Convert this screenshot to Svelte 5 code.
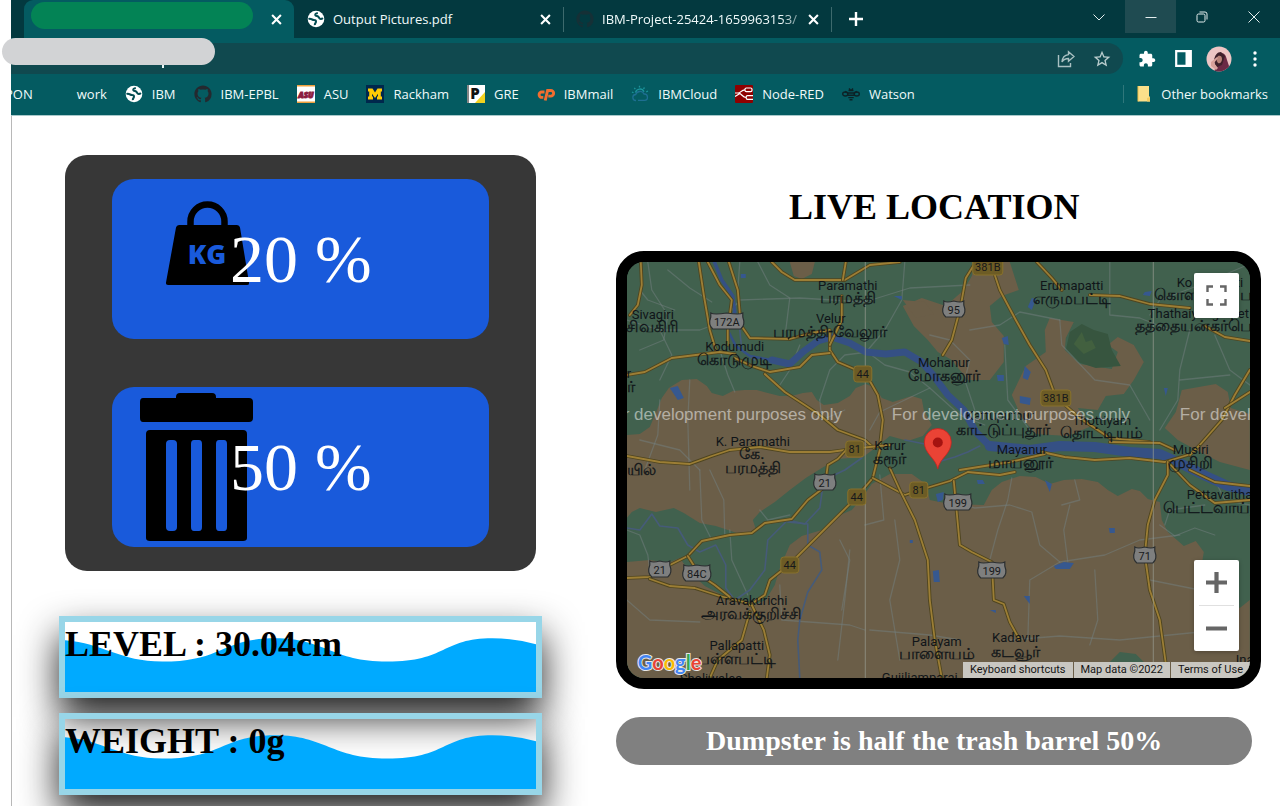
<script>
  const bookmarks = [
    { icon: 'globe', label: 'IBM' },
    { icon: 'github', label: 'IBM-EPBL' },
    { icon: 'asu', label: 'ASU' },
    { icon: 'mich', label: 'Rackham' },
    { icon: 'gre', label: 'GRE' },
    { icon: 'cpanel', label: 'IBMmail' },
    { icon: 'cloud', label: 'IBMCloud' },
    { icon: 'node', label: 'Node-RED' },
    { icon: 'bee', label: 'Watson' }
  ];

  const readings = ['LEVEL : 30.04cm', 'WEIGHT : 0g'];

  const land = [
    'M627 435L640 434 650 427 656 413 662 398 669 388 682 380 697 379 707 386 712 393 723 396 733 391 745 390 757 390 768 393 780 396 792 396 803 393 812 392 817 400 824 405 838 403 850 396 856 388 866 384 876 388 882 398 893 402 912 396 922 399 924 410 932 425 923 436 908 441 890 436 878 446 862 458 850 458 838 459 822 468 806 478 790 490 775 502 760 512 753 520 757 532 740 534 716 526 700 523 684 513 674 508 656 512 640 508 632 512 627 518Z',
    'M627 562L650 560 668 563 680 558 690 572 705 586 728 598 752 606 766 600 775 585 780 568 790 545 802 536 822 530 838 516 852 510 862 498 872 484 890 474 912 474 926 484 930 500 950 504 984 505 992 490 1002 482 1020 476 1036 477 1050 484 1064 480 1082 479 1098 482 1108 490 1118 496 1132 489 1140 491 1148 499 1160 502 1162 520 1168 532 1184 546 1196 541 1204 552 1202 564 1210 580 1216 595 1240 608 1250 600 1250 678 627 678Z',
    'M975 262L1010 262 1019 290 1002 296 990 306 992 322 1004 336 1004 362 990 380 968 380 952 360 938 352 928 340 914 326 903 306 922 298 946 306 964 290 972 276Z',
    'M1045 330L1050 318 1074 322 1066 338 1065 350 1080 364 1112 369 1118 352 1108 345 1118 337 1134 345 1144 362 1134 380 1124 394 1106 396 1098 410 1078 408 1092 426 1068 436 1036 434 1022 418 1012 395 1026 366 1046 352Z',
    'M1182 390L1216 384 1228 392 1231 408 1250 414 1250 470 1220 462 1200 452 1178 440 1165 428 1176 412Z',
    'M790 262L815 262 812 274 802 279 794 276Z',
    'M903 300L925 302 934 314 916 318Z'
  ];

  const minor = [
    'M627 320L660 330 700 330 722 322 740 300 800 298 865 302 910 288 970 285',
    'M648 262L652 290 668 315 664 340 640 350', 'M668 270L690 288 712 302',
    'M758 262L770 285 790 298 786 330', 'M905 262L902 300 885 330 868 350',
    'M865 350L885 365 910 372 930 388 960 415 985 425', 'M930 388L905 400 880 412 870 430',
    'M820 400L830 370 845 355 868 352', 'M820 400L822 420 845 410',
    'M970 330L1000 325 1020 312 1060 320', 'M930 335L950 340 970 360 965 380 975 410',
    'M1110 262L1110 315 1140 318 1170 330', 'M1250 264L1200 285 1160 300 1150 315',
    'M1190 330L1180 370 1178 400 1160 430', 'M1215 335L1230 370 1250 385', 'M1180 380L1230 375',
    'M1060 320L1062 345 1095 380 1130 385 1150 420', 'M1005 345L1008 400 1030 430',
    'M690 380L688 420 690 490', 'M660 400L658 435 645 470', 'M700 470L702 520 712 540',
    'M627 530L640 535 648 555 650 570', 'M730 530L732 560 748 595', 'M760 510L768 520 790 515',
    'M840 540L850 560 842 610', 'M880 475L884 520 865 525', 'M780 585L782 620 850 625 865 630',
    'M710 470L724 500 725 535', 'M850 550L845 600 838 660', 'M870 630L930 635 960 640',
    'M945 500L975 508 1010 505 1032 512 1040 545 1060 562', 'M1060 562L1105 555 1140 540 1180 535',
    'M1060 562L1030 580 1028 640', 'M1070 505L1064 530 1068 562', 'M1010 640L1060 636 1120 640 1200 632',
    'M1150 580L1190 588 1200 590', 'M1095 570L1098 620 1090 645', 'M990 560L998 530 1008 500 1012 478',
    'M1160 525L1175 536 1195 528 1215 535', 'M1165 525L1170 510 1205 505', 'M640 440L680 450 700 470',
    'M627 600L650 620 700 622', 'M675 310L648 300 640 290', 'M660 330L672 355 660 380',
    'M720 350L728 375 735 392', 'M800 345L790 370 780 385', 'M895 520L900 560 890 600 900 660',
    'M1075 480L1080 500 1062 505', 'M1215 480L1225 500 1250 505', 'M740 262L738 290'
  ];

  const streams = [
    'M627 528L640 530 652 514 660 526 678 528 688 545 700 552 716 545 726 565 726 588 735 600 750 590 765 570 768 540 788 520 805 524 820 508 824 480 845 470 862 458',
    'M808 545L820 552 822 570 808 592 800 620 798 640 800 678',
    'M938 462L955 457 968 452 980 446', 'M905 440L925 444 938 444',
    'M788 522L808 524 808 545', 'M740 330L742 350 755 360'
  ];

  const roads = [
    'M641 262L642 285 638 305 630 315', 'M699 262L704 295 710 330 716 350',
    'M708 262L720 285 732 300 728 330 728 345', 'M729 262L738 290 741 325 750 338 790 339',
    'M790 339L812 333 830 330 830 350 838 362 866 374 878 395 883 420 880 447',
    'M627 375L645 372 672 358 720 352 735 354', 'M735 358L752 366 770 372 800 367 812 355 830 353',
    'M772 262L782 272 795 280 845 280', 'M842 296L842 320 830 345', 'M845 280L870 265 900 262',
    'M843 280L846 262', 'M765 374L785 392 805 405 820 415 838 430 865 440 874 448',
    'M627 456L660 462 690 464 712 456 730 450 760 447 790 452 830 452 860 448 890 445',
    'M627 578L650 577 670 565 688 556 702 541 730 535 752 533 765 523 792 519 808 500 825 487 828 465 838 459 850 446',
    'M650 579L670 586 695 588 720 596 748 603', 'M688 556L700 575 715 585 730 597',
    'M750 605L765 595 770 580 790 564 810 544 838 516 856 498 873 478 880 450',
    'M752 605L764 630 770 655 767 678', 'M750 612L742 640 718 660 710 678',
    'M873 478L905 495 920 490 950 481 968 472 1000 475 1015 472',
    'M890 468L900 490 915 520 928 560 930 600 935 640 942 678', 'M954 481L956 502 960 545 972 552 992 562 994 600 1004 604 1010 622 1020 640',
    'M976 262L966 278 962 300 960 310 952 340 943 355', 'M992 266L1000 290 1016 320 1030 345 1046 370 1056 397 1080 418 1110 438 1150 442',
    'M1037 262L1052 278 1062 290', 'M1090 295L1120 296 1150 304 1190 308', 'M1205 326L1225 337 1250 341',
    'M1250 370L1235 395 1222 420 1200 445 1190 455', 'M1042 452L1065 457 1095 460 1130 458 1165 462 1188 455',
    'M1110 442L1160 443 1175 450', 'M1168 462L1168 475 1155 500 1148 525 1145 555 1150 590 1160 620 1168 678',
    'M1170 464L1190 485 1215 503 1250 500', 'M1190 470L1215 482 1250 486',
    'M960 470L1010 462 1045 454', 'M1250 392L1225 408'
  ];

  const ponds = [
    'M670 388L678 386 684 398 678 400Z', 'M741 274h5v4h-5Z', 'M1036 299L1032 310 1028 307 1032 298Z',
    'M1002 338L1008 336 1009 345 1004 344Z', 'M1025 366L1031 372 1028 380 1023 378Z',
    'M1020 396L1031 398 1030 405 1020 403Z', 'M1164 388h4l-2 8Z', 'M1145 292L1152 291 1150 296 1143 295Z',
    'M1045 480L1052 484 1050 492Z', 'M1054 566L1064 562 1074 563 1070 569 1056 569Z',
    'M936 494L944 492 943 500 938 502Z', 'M933 571L939 570 940 582 934 582Z', 'M1024 596h6v8Z',
    'M1109 528h6v5h-5Z', 'M977 480h6l2 4h-7Z', 'M894 296h8v4Z', 'M990 610h6v3Z', 'M997 375h7v6h-6Z', 'M910 540h3v3h-3Z'
  ];

  const places = [
    [848, 290, 'Paramathi'], [831, 323, 'Velur'], [653, 319, 'Sivagiri'], [735, 351, 'Kodumudi'],
    [944, 367, 'Mohanur'], [1072, 290, 'Erumapatti'], [1000, 420, 'Kattuputhur'], [1102, 425, 'Thottiyam'],
    [1022, 454, 'Mayanur'], [1191, 454, 'Musiri'], [753, 446, 'K. Paramathi'], [890, 450, 'Karur'],
    [752, 605, 'Aravakurichi'], [737, 650, 'Pallapatti'], [711, 683, 'Sholiwales'], [937, 646, 'Palayam'],
    [1016, 642, 'Kadavur'], [920, 682, 'Gujiliamparai']
  ];
  const tamilPlaces = [
    [848, 303, 'பரமத்தி'], [830, 337, 'பரமத்தி-வேலூர்'], [653, 332, 'சிவகிரி'], [735, 365, 'கொடுமுடி'],
    [944, 381, 'மோகனூர்'], [1072, 304, 'எருமபட்டி'], [1003, 435, 'காட்டுப்புதூர்'], [1102, 438, 'தொட்டியம்'],
    [1021, 468, 'மாயனூர்'], [1191, 468, 'முசிறி'], [752, 459, 'கே.'], [753, 473, 'பரமத்தி'], [890, 464, 'கரூர்'],
    [752, 619, 'அரவக்குறிச்சி'], [737, 664, 'பள்ளபட்டி'], [937, 659, 'பாளையம்'], [1016, 657, 'கடவூர்']
  ];
  const edgePlaces = [
    [1177, 287, 'Ko'], [1236, 287, 'ti'], [1148, 318, 'Thathaiyangarpet'], [1187, 499, 'Pettavaithalai'],
    [627, 378, 'r'], [1236, 664, 'Inam']
  ];
  const tamilEdge = [
    [1154, 300, 'கொள'], [1240, 300, 'ப'], [1135, 331, 'தத்தையன்கர்பெட்'], [1163, 513, 'பெட்டவாய்த்'],
    [627, 475, 'யில்'], [627, 392, 'ர்']
  ];
  const greyShields = [[727, 322, '172A'], [954, 310, '95'], [825, 483, '21'], [660, 570, '21'], [697, 574, '84C'], [958, 503, '199'], [992, 571, '199'], [1145, 556, '71']];
  const goldShields = [[863, 374, '44'], [855, 449, '81'], [857, 497, '44'], [919, 490, '81'], [790, 565, '44'], [1056, 398, '381B'], [988, 267, '381B']];
</script>

{#snippet icon(name)}
  <svg class="fav" viewBox="0 0 18 18" aria-hidden="true">
    {#if name === 'globe'}
      <circle cx="9" cy="9" r="8.3" fill="#fff" />
      <path d="M1.500 9c2.500-.8 3.800.9 5.200 1 1.700.1 2.500.4 2.300 1.900-.2 1.300-1.400 1.600-1.200 3.300M10.800 3C9 3.300 8 4 8.300 5.100c.4 1.300 2 .7 3 1.600 1 1 .8 2.200 2.400 2.300 1 .1 1.700-.5 2.200-1" fill="none" stroke="#044c52" stroke-width="2" />
    {:else if name === 'github'}
      <path transform="translate(.4 .4) scale(1.075)" fill="#24292f" d="M8 0C3.580 0 0 3.580 0 8c0 3.540 2.290 6.530 5.470 7.590.4.070.55-.170.55-.380 0-.190-.010-.820-.010-1.490-2.010.370-2.530-.490-2.690-.940-.090-.230-.480-.940-.820-1.130-.280-.150-.680-.520-.010-.530.630-.010 1.080.580 1.230.820.720 1.210 1.870.870 2.330.660.070-.520.280-.870.510-1.070-1.780-.2-3.640-.890-3.640-3.950 0-.870.310-1.590.820-2.150-.080-.2-.360-1.020.080-2.120 0 0 .670-.210 2.200.820.640-.180 1.320-.270 2-.270s1.360.090 2 .270c1.530-1.040 2.200-.820 2.200-.820.440 1.100.160 1.920.080 2.120.510.560.820 1.270.820 2.150 0 3.070-1.870 3.750-3.650 3.950.290.250.540.730.540 1.480 0 1.070-.010 1.930-.010 2.200 0 .210.150.460.550.380A8.010 8.010 0 0 0 16 8c0-4.420-3.580-8-8-8z" />
    {:else if name === 'asu'}
      <path d="M0 0h18v18H0z" fill="#fff" /><path d="M0 0h18v1.500H0zM0 16.500h18V18H0z" fill="#f0a03c" />
      <text x="9" y="12.500" text-anchor="middle" font-size="8" font-style="italic" font-weight="800" fill="#8c1d40" stroke="#8c1d40" stroke-width="1">ASU</text>
    {:else if name === 'mich'}
      <path d="M0 0h18v18H0z" fill="#00274c" />
      <path d="M2 3.500h4.500L9 7.500l2.500-4H16v3h-1.200v5H16v3h-5v-3h1V8.800L9 13 6 8.800v2.700h1v3H2v-3h1.200v-5H2z" fill="#ffcb05" />
    {:else if name === 'gre'}
      <path d="M0 0h18v18H0z" fill="#fff" /><path d="M18 7v11H8z" fill="#f2d21f" /><path d="M1 0v18" stroke="#111" />
      <text x="8" y="14" text-anchor="middle" font-size="15" font-weight="800" fill="#111">P</text>
    {:else if name === 'cpanel'}
      <g fill="none" stroke="#f26d2f" stroke-width="2.900"><path d="M7.500 7H4.800a2.700 2.700 0 0 0 0 5.400h1.500" /><path d="M8.200 15.500l2.400-10h3.200a2.700 2.700 0 0 1 0 5.600h-2.500" /></g>
    {:else if name === 'cloud'}
      <g fill="none" stroke="#15808a" stroke-width="1.300"><path d="M5 15.500a3 3 0 0 1-.3-6A4.500 4.500 0 0 1 13 9a3.200 3.200 0 0 1 .5 6.400H7" stroke="#1e6f92" /><path d="M4.500 7.500a4.500 4.500 0 0 1 8.500-.8M1 7l1.500.8M3.300 2.800l1 1.300M8.500.8v1.700M13.500 2.500l-1 1.400M17 6l-1.700.9" stroke="#1c949b" /></g>
    {:else if name === 'node'}
      <rect width="18" height="18" rx="1" fill="#8f0000" />
      <g fill="none" stroke="#fff" stroke-width="1.200"><rect x="10" y="3" width="7" height="3.600" rx="1.300" /><path d="M18 10.600h-5.500a1.300 1.300 0 0 0-1.300 1.300v1.200a1.300 1.300 0 0 0 1.300 1.300H18M0 8h3c3 0 3-3.200 7-3.200M3 8c4 0 4 4.500 8 4.500M0 11.500l5-3" /></g>
    {:else if name === 'bee'}
      <g fill="none" stroke="#0d2226" stroke-width="1.400"><ellipse cx="3.300" cy="9" rx="2.600" ry="2" /><ellipse cx="14.700" cy="9" rx="2.600" ry="2" /><path d="M6.500 5.500h5M6 8h6M6 10.300h6M6.300 12.600h5.400M7.500 14.800h3M7 3.500l1.500 1.500M11 3.500L9.500 5M3 6.500L6 8M15 6.500L12 8" /></g>
    {/if}
  </svg>
{/snippet}

{#snippet cross()}
  <svg class="cross" viewBox="0 0 10 10" aria-hidden="true"><path d="M1 1l8 8M9 1L1 9" stroke="#fff" stroke-width="1.900" /></svg>
{/snippet}

<div class="browser">
  <header>
    <div class="tabstrip">
      <div class="tab active"><span class="tabmask"></span><button aria-label="Close tab">{@render cross()}</button></div>
      <div class="tab">{@render icon('globe')}<span class="title">Output Pictures.pdf</span><button aria-label="Close tab">{@render cross()}</button></div>
      <div class="tab dim">{@render icon('github')}<span class="title fade">IBM-Project-25424-1659963153/</span><button aria-label="Close tab">{@render cross()}</button></div>
      <button class="newtab" aria-label="New tab"><svg width="14" height="14" viewBox="0 0 14 14"><path d="M7 0v14M0 7h14" stroke="#fff" stroke-width="2.400" /></svg></button>
      <div class="winctl">
        <button aria-label="Search tabs"><svg width="12" height="12" viewBox="0 0 12 12"><path d="M.5 3.500L6 9l5.500-5.500" /></svg></button>
        <button class="min" aria-label="Minimize"><svg width="12" height="12" viewBox="0 0 12 12"><path d="M.5 6.500h11" /></svg></button>
        <button aria-label="Restore"><svg width="12" height="12" viewBox="0 0 12 12"><rect x="1" y="3" width="8" height="8" rx="1.500" /><path d="M3.500 1H9a2 2 0 0 1 2 2v5.500" /></svg></button>
        <button aria-label="Close window"><svg width="12" height="12" viewBox="0 0 12 12"><path d="M.5.5l11 11M11.500.5l-11 11" /></svg></button>
      </div>
    </div>
    <div class="toolbar">
      <div class="omnibox">
        <input type="text" aria-label="Address" />
        <span class="urlmask"></span><span class="caret"></span>
        <button aria-label="Share"><svg width="18" height="18" viewBox="0 0 18 18" fill="none" stroke="#a9c0c2" stroke-width="1.400"><path d="M1.500 5v11.500h12V13" /><path d="M11.500 1.700L17 6.500l-5.500 4.700V8.500C8 8.500 6.300 9.800 5 12c.3-4 2.600-7 6.500-7.400z" /></svg></button>
        <button aria-label="Bookmark"><svg width="20" height="20" viewBox="0 0 24 24" fill="#b9cccd"><path d="M22 9.240l-7.190-.620L12 2 9.190 8.630 2 9.240l5.460 4.730L5.820 21 12 17.270 18.180 21l-1.630-7.030L22 9.240zM12 15.400l-3.760 2.270 1-4.280-3.320-2.880 4.380-.380L12 6.100l1.710 4.040 4.380.380-3.320 2.880 1 4.280L12 15.400z" /></svg></button>
      </div>
      <button aria-label="Extensions"><svg width="18" height="18" viewBox="0 0 24 24" fill="#fff"><path d="M20.500 11H19V7c0-1.100-.9-2-2-2h-4V3.500C13 2.120 11.880 1 10.500 1S8 2.120 8 3.500V5H4c-1.100 0-1.990.9-1.990 2v3.800H3.500c1.490 0 2.700 1.210 2.700 2.700s-1.210 2.700-2.700 2.700H2V20c0 1.100.9 2 2 2h3.800v-1.500c0-1.490 1.210-2.700 2.700-2.700 1.490 0 2.700 1.210 2.700 2.700V22H17c1.100 0 2-.9 2-2v-4h1.500c1.380 0 2.500-1.120 2.500-2.500S21.880 11 20.500 11z" /></svg></button>
      <button aria-label="Side panel"><svg width="17" height="17" viewBox="0 0 17 17"><path d="M1.200 1.200h14.600v14.600H1.200z" fill="none" stroke="#fff" stroke-width="2.200" /><path d="M10.500 1H16v15h-5.500z" fill="#fff" /></svg></button>
      <button aria-label="Profile"><svg width="26" height="26" viewBox="0 0 26 26"><defs><clipPath id="av"><circle cx="13" cy="13" r="12.500" /></clipPath></defs><g clip-path="url(#av)"><path d="M0 0h26v26H0z" fill="#edc5c4" /><path d="M8 26l3-9c-1-4 0-9 4-10 4 0 5 3 6 7l4 12z" fill="#6b2a45" /><path d="M8 14c1-5 3-8 7-8l4 4-3 9-5 2-2-2z" fill="#40202b" /><path d="M12 10c2-1 4 0 4 3s-2 5-4 4c-2-2-2-5 0-7z" fill="#b98278" /><path d="M5 16l6-5 1 1-4 5 4 5-2 2-5-4z" fill="#d9a19b" /></g></svg></button>
      <button aria-label="Menu"><svg width="4" height="16" viewBox="0 0 4 16" fill="#fff"><circle cx="2" cy="2" r="1.700" /><circle cx="2" cy="8" r="1.700" /><circle cx="2" cy="14" r="1.700" /></svg></button>
    </div>
    <nav class="bookmarks" aria-label="Bookmarks">
      <a class="first" href="#top">PON</a>
      <a class="work" href="#top">work</a>
      {#each bookmarks as b}
        <a href="#top">{@render icon(b.icon)}{b.label}</a>
      {/each}
      <a class="other" href="#top"><svg class="fav" viewBox="0 0 18 18" aria-hidden="true"><path d="M3 1h11v10l1 1v4.500H3z" fill="#fbe08a" /><path d="M3 1v15.500" stroke="#f0c04a" /><path d="M12 16.500V13l3-1v4.500z" fill="#f3cd62" /></svg>Other bookmarks</a>
    </nav>
  </header>

  <main id="top">
    <section class="left">
      <div class="panel">
        <div class="gauge">
          <svg viewBox="0 0 160 160" aria-hidden="true">
            <path d="M79 51V38a17 17 0 0 1 34 0v13" fill="none" stroke="#000" stroke-width="6.500" transform="translate(-.5 4.500)" />
            <path d="M67 46h58q2.500 0 3 2.500l9 55q.4 2.500-2 2.500H56q-2.500 0-2-2.500l10-55q.5-2.500 3-2.500z" />
            <text x="95" y="85" text-anchor="middle" font-size="27" font-weight="800" fill="#195adb">KG</text>
          </svg>
          <span>20 %</span>
        </div>
        <div class="gauge">
          <svg viewBox="0 0 160 160" aria-hidden="true">
            <path d="M31 11h33v-1q0-4 4-4h32q4 0 4 4v1h33q4 0 4 4v16q0 4-4 4H31q-3 0-3-4V15q0-4 3-4z" />
            <path fill-rule="evenodd" d="M38 43h93q4 0 4 4v104q0 3-4 3H38q-4 0-4-3V47q0-4 4-4zM58 53q-4 0-4 4v83q0 4 4 4h3q4 0 4-4V57q0-4-4-4zM82 53q-3 0-3 4v83q0 4 3 4h5q3 0 3-4V57q0-4-3-4zM107 53q-3 0-3 4v83q0 4 3 4h5q3 0 3-4V57q0-4-3-4z" />
          </svg>
          <span>50 %</span>
        </div>
      </div>
      {#each readings as r}
        <div class="wave">
          <svg viewBox="0 0 471 69" preserveAspectRatio="none" aria-hidden="true"><path d="M0 18C38 21 55 39 97 39C158 39 156 16 210 16C260 16 266 39 322 39C382 39 376 16 427 16Q450 16 471 22V69H0z" fill="#00aaff" /></svg>
          <h2>{r}</h2>
        </div>
      {/each}
    </section>

    <section class="right">
      <h1>LIVE LOCATION</h1>
      <div class="map">
        <svg class="canvas" viewBox="627 262 623 416" preserveAspectRatio="xMidYMid slice" role="img" aria-label="Map of Karur">
          <path d="M0 0h2000v1000H0z" fill="#41614e" />
          {#each land as d}<path {d} fill="#6b5e48" />{/each}
          <path d="M1066 350L1070 332 1082 324 1094 330 1108 334 1112 350 1121 366 1096 368 1078 362Z" fill="#37553f" />
          <path d="M1074 344l8-12 4 10 6-2 4 8-12 6z" fill="#42603f" />
          <path d="M1108 664L1120 652 1136 654 1146 664 1152 678H1112z" fill="#41614e" />
          <g fill="none" stroke-linejoin="round" stroke-linecap="round">
            {#each minor as d}<path {d} stroke="#74807f" stroke-opacity=".5" stroke-width="1.300" />{/each}
            {#each streams as d}<path {d} stroke="#465b79" stroke-width="1.600" />{/each}
            <path d="M713 258L722 280 733 296 735 312 728 330" stroke="#355084" stroke-width="3.500" />
            <path d="M728 330L736 346 750 356 772 360" stroke="#355084" stroke-width="2.500" />
            <path d="M772 360L790 364 803 352 818 341 832 337 850 343 866 352 886 354 905 352 922 362 934 376 948 395 964 410 976 432 990 446" stroke="#355084" stroke-width="7" />
            <path d="M990 446L1030 450 1060 446 1095 447 1130 452 1160 454 1182 464 1206 476 1228 486 1254 492" stroke="#355084" stroke-width="10" />
            {#each roads as d}<path {d} stroke="#4f451f" stroke-width="3.600" /><path {d} stroke="#9c7e35" stroke-width="1.800" />{/each}
          </g>
          {#each ponds as d}<path {d} fill="#36588f" />{/each}
          <path d="M865.500 262v416M1153.500 262v416" stroke="#9a9d91" stroke-opacity=".7" />
          <g font-size="11" text-anchor="middle" fill="#17191b">
            {#each greyShields as [x, y, t]}
              <path transform="translate({x} {y})" d="M{-4 - t.length * 3} -9q3 2 {4 + t.length * 3} 0q{t.length * 3 + 1} 2 {4 + t.length * 3} 0v4q3 8 -2 12H{-2 - t.length * 3}q-5-4-2-12z" fill="#7e7f7f" stroke="#2b2f31" stroke-width="1.200" />
              <text {x} y={y + 4}>{t}</text>
            {/each}
            {#each goldShields as [x, y, t]}
              <rect x={x - 3 - t.length * 3} y={y - 8} width={6 + t.length * 6} height="16" rx="3" fill="#6d5c25" stroke="#88712c" />
              <text {x} y={y + 4}>{t}</text>
            {/each}
          </g>
          <g class="names">
            {#each places as [x, y, t]}<text {x} {y} text-anchor="middle">{t}</text>{/each}
            {#each edgePlaces as [x, y, t]}<text {x} {y}>{t}</text>{/each}
          </g>
          <g class="tamil" lang="ta">
            {#each tamilPlaces as [x, y, t]}<text {x} {y} text-anchor="middle">{t}</text>{/each}
            {#each tamilEdge as [x, y, t]}<text {x} {y}>{t}</text>{/each}
          </g>
          <g class="water">
            {#each [604, 892, 1180] as x}<text {x} y="420">For development purposes only</text>{/each}
          </g>
          <path d="M938 469C936 458 924.500 454 924.500 442a13.500 13.500 0 0 1 27 0C951.500 454 940 458 938 469z" fill="#ea4335" stroke="#c5221f" stroke-width=".8" />
          <circle cx="938" cy="442.500" r="5" fill="#a51310" />
          <text class="google" x="638" y="670"><tspan fill="#4285f4">G</tspan><tspan fill="#ea4335">o</tspan><tspan fill="#fbbc04">o</tspan><tspan fill="#4285f4">g</tspan><tspan fill="#34a853">l</tspan><tspan fill="#ea4335">e</tspan></text>
        </svg>
        <button class="full" aria-label="Toggle fullscreen view"><svg width="21" height="21" viewBox="0 0 21 21"><path d="M1.500 7V1.500H7M14 1.500h5.500V7M19.500 14v5.500H14M7 19.500H1.500V14" fill="none" stroke="#666" stroke-width="2.400" /></svg></button>
        <div class="zoom">
          <button aria-label="Zoom in"><svg width="21" height="21" viewBox="0 0 21 21"><path d="M10.500 0v21M0 10.500h21" stroke="#666" stroke-width="4.200" /></svg></button>
          <button aria-label="Zoom out"><svg width="21" height="21" viewBox="0 0 21 21"><path d="M0 10.500h21" stroke="#666" stroke-width="4.200" /></svg></button>
        </div>
        <div class="legal"><button>Keyboard shortcuts</button><span>Map data ©2022</span><a href="#top">Terms of Use</a></div>
      </div>
      <p class="status">Dumpster is half the trash barrel 50%</p>
    </section>
  </main>
</div>

<style>
  :global(body) { background: #fff; overflow: hidden; }
  .browser { margin-left: 11px; font-family: "Open Sans", sans-serif; }
  button { border: 0; background: none; padding: 0; margin: 0; font: inherit; color: inherit; display: flex; align-items: center; justify-content: center; }
  a { color: inherit; text-decoration: none; }

  header { background: #045b61; color: #f0fafa; font-size: 13px; border-bottom: 1px solid #a9c9cb; }
  .fav { width: 18px; height: 18px; flex: none; }
  .tabstrip { display: flex; align-items: center; height: 38px; background: #03393f; padding-left: 13px; }
  .tab { box-sizing: border-box; flex: 0 1 269px; min-width: 0; height: 38px; display: flex; align-items: center; padding: 0 10px 0 13px; }
  .tab .fav { margin-right: 8px; }
  .tab.active { flex-basis: 270px; background: #045b61; border-radius: 9px 9px 0 0; padding-left: 7px; justify-content: space-between; }
  .tab.dim { border: solid #3d6a6d; border-width: 0 1px; border-image: linear-gradient(transparent 8px, #3d6a6d 8px, #3d6a6d 31px, transparent 31px) 1; padding-left: 12px; }
  .tab.dim .fav { opacity: .55; }
  .tabmask { width: 222px; height: 27px; border-radius: 14px; background: #038355; margin-bottom: 7px; }
  .title { flex: 1; white-space: nowrap; overflow: hidden; }
  .fade { mask-image: linear-gradient(90deg, #000 88%, #0004); }
  .tab button { width: 16px; height: 16px; flex: none; }
  .cross { width: 11px; height: 11px; }
  .newtab { width: 48px; height: 38px; }
  .winctl { margin-left: auto; align-self: flex-start; display: flex; }
  .winctl button { width: 52px; height: 33px; }
  .winctl .min { background: #1f4b51; width: 51px; }
  .winctl svg { fill: none; stroke: #e4eeee; stroke-width: 1; }

  .toolbar { display: flex; align-items: center; padding: 5px 7px 0 0; }
  .toolbar button { width: 36px; height: 31px; flex: none; }
  .omnibox { flex: 1; display: flex; position: relative; height: 31px; background: #10494f; border-radius: 0 16px 16px 0; padding-right: 3px; margin-right: 6px; }
  .omnibox input { flex: 1; min-width: 0; border: 0; background: none; outline: 0; }
  .urlmask { position: absolute; left: -9px; top: -5px; width: 213px; height: 27px; border-radius: 14px; background: #d2d3d5; }
  .caret { position: absolute; left: 151px; top: 22px; width: 2px; height: 3px; background: #e9f6f6; }

  .bookmarks { display: flex; align-items: center; gap: 18px; height: 40px; padding: 0 12px 1px 0; white-space: nowrap; overflow: hidden; }
  .bookmarks a { display: flex; align-items: center; gap: 9px; }
  .bookmarks .first { margin-left: -6px; }
  .bookmarks .work { margin-left: 26px; }
  .bookmarks .other { margin-left: auto; border-left: 1px solid #2f777b; padding-left: 11px; gap: 8px; }

  main { border-left: 1px solid #b8b8b8; padding: 39px 19px 0 47px; display: grid; grid-template-columns: 3fr 4fr; column-gap: 74px; font-family: "Liberation Serif", serif; align-items: start; }
  .panel { margin: 0 6px 45px; background: #373737; border-radius: 22px; padding: 24px 0; display: grid; justify-items: center; gap: 48px; }
  .gauge { display: grid; width: 80%; height: 160px; border-radius: 22px; background: #195adb; overflow: hidden; }
  .gauge > * { grid-area: 1 / 1; }
  .gauge svg { width: 160px; height: 160px; font-family: "Open Sans", sans-serif; }
  .gauge span { place-self: center; color: #fff; font-size: 68px; line-height: 76px; }
  .wave { position: relative; border: 6px solid #98d6e8; box-shadow: 0 19px 38px #000000e0; margin-bottom: 15px; }
  .wave svg { position: absolute; inset: 0; width: 100%; height: 100%; }
  .wave h2 { position: relative; margin: 0; padding-bottom: 26px; font-size: 36px; line-height: 44px; color: #000; white-space: nowrap; }

  h1 { margin: 32px 9px 24px 0; text-align: center; font-size: 36px; line-height: 40px; }
  .map { position: relative; height: 416px; border: 11px solid #000; border-radius: 28px; overflow: hidden; font-family: Roboto, sans-serif; background: #41614e; }
  .canvas { display: block; width: 100%; height: 100%; }
  .names { font-size: 13px; fill: #101519; }
  .tamil { font-size: 16px; fill: #101519; stroke: #101519; stroke-width: .3px; }
  .water { font-size: 17px; font-family: "Liberation Sans", sans-serif; fill: #fff; fill-opacity: .5; }
  .google { font-family: Lato, sans-serif; font-size: 20px; font-weight: 700; stroke: #e8e8e8; stroke-width: 2px; paint-order: stroke; }
  .full, .zoom { position: absolute; right: 11px; width: 45px; background: #fff; border-radius: 2px; box-shadow: 0 1px 4px #0004; }
  .full { top: 11px; height: 45px; }
  .zoom { bottom: 27px; padding: 0 5px; box-sizing: border-box; }
  .zoom button { width: 100%; height: 45px; }
  .zoom button + button { border-top: 1px solid #e0e0e0; height: 46px; }
  .legal { position: absolute; right: 0; bottom: 0; display: flex; gap: 1px; font-size: 11px; line-height: 16px; color: #151515; white-space: nowrap; }
  .legal > * { background: #c9c7c1; padding: 0 7px; }
  .status { margin: 28px 9px 0 0; background: #808080; color: #fff; border-radius: 24px; text-align: center; font-size: 28px; line-height: 48px; font-weight: 700; }
</style>
